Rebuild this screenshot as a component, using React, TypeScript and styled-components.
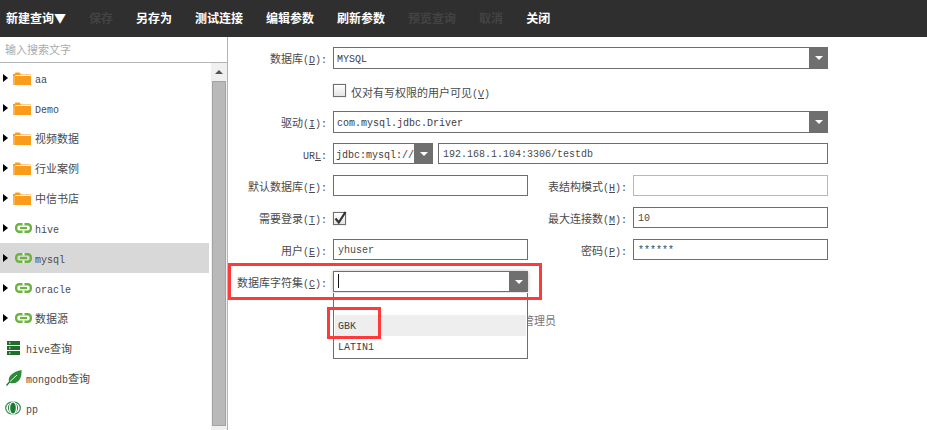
import React from 'react';
import styled, { createGlobalStyle } from 'styled-components';

const Global = createGlobalStyle`
  html, body { margin: 0; padding: 0; background: #fff; }
  body { width: 927px; height: 430px; overflow: hidden; font-family: "Noto Sans CJK SC", "Liberation Sans", sans-serif; }
  * { box-sizing: border-box; }
`;

const Page = styled.div`
  position: relative;
  width: 927px;
  height: 430px;
  display: flex;
  flex-direction: column;
  overflow: hidden;
`;
const Toolbar = styled.div`
  height: 37px;
  background: #2f2f2f;
  display: flex;
  align-items: center;
  gap: 23px;
  padding: 0 0 1px 6px;
  flex: none;
`;
const ToolButton = styled.span<{ $off?: boolean }>`
  font-size: 12px;
  line-height: 16px;
  font-weight: 700;
  white-space: nowrap;
  color: ${p => (p.$off ? '#434343' : '#ffffff')};
`;
const Body = styled.div`
  flex: 1;
  display: flex;
  min-height: 0;
`;
const Sidebar = styled.aside`
  width: 228px;
  flex: none;
  border-right: 1px solid #b4b4b4;
  display: flex;
  flex-direction: column;
`;
const Search = styled.div`
  height: 26px;
  flex: none;
  border-bottom: 1px solid #b4b4b4;
  padding-left: 5px;
  font-size: 11px;
  line-height: 25px;
  color: #aaaaaa;
`;
const TreeArea = styled.div`
  flex: 1;
  display: flex;
  min-height: 0;
`;
const Tree = styled.div`
  width: 209px;
  flex: none;
`;
const Row = styled.div<{ $selected?: boolean }>`
  height: 30px;
  display: flex;
  align-items: center;
  background: ${p => (p.$selected ? '#d8d8d8' : 'transparent')};
  font-size: 11px;
  color: #4a4a4a;
`;
const Caret = styled.span`
  width: 0;
  height: 0;
  margin-left: 3px;
  margin-right: 5px;
  border-left: 5px solid #000;
  border-top: 4.5px solid transparent;
  border-bottom: 4.5px solid transparent;
  flex: none;
`;
const IconSlot = styled.span<{ $w: number; $ml?: number }>`
  display: flex;
  width: ${p => p.$w}px;
  margin-left: ${p => p.$ml ?? 0}px;
  flex: none;
`;
const Mono = styled.span`
  font-family: "Liberation Mono", monospace;
  font-size: 10px;
`;
const Track = styled.div`
  margin-left: 2px;
  width: 16px;
  flex: none;
  background: #f0f0f0;
  display: flex;
  flex-direction: column;
  align-items: center;
  padding-bottom: 4px;
`;
const TrackButton = styled.div`
  height: 18px;
  flex: none;
  display: flex;
  align-items: center;
  justify-content: center;
`;
const UpArrow = styled.span`
  width: 0;
  height: 0;
  border-left: 4px solid transparent;
  border-right: 4px solid transparent;
  border-bottom: 4px solid #555;
`;
const Thumb = styled.div`
  flex: 1;
  width: 14px;
  background: #b9b9b9;
  border: 1px solid #a3a3a3;
`;
const Main = styled.main`
  position: relative;
  flex: 1;
  padding: 10px 0 0 0;
`;
const Form = styled.div`
  display: grid;
  grid-template-columns: 100px 200px 100px 200px;
  grid-auto-rows: 22px;
  row-gap: 10px;
`;
const Label = styled.label`
  font-size: 11px;
  line-height: 23px;
  color: #4a4a4a;
  text-align: right;
  white-space: nowrap;
  padding-right: 1px;
`;
const Field = styled.div<{ $span?: number }>`
  margin-left: 5px;
  grid-column: span ${p => p.$span ?? 1};
  min-width: 0;
`;
const Input = styled.div<{ $light?: boolean }>`
  height: 21px;
  border: 1px solid ${p => (p.$light ? '#b8b8b8' : '#6e6e6e')};
  padding-left: 4px;
  line-height: 22px;
  color: #4a4a4a;
  font-family: "Liberation Mono", monospace;
  font-size: 10px;
  white-space: nowrap;
  flex: 1;
  min-width: 0;
`;
const SelectBox = styled.div<{ $focus?: boolean; $h?: number }>`
  height: ${p => p.$h ?? 22}px;
  border: 1px solid #6e6e6e;
  display: flex;
  align-items: stretch;
  ${p => (p.$focus ? 'box-shadow: 0 0 4px rgba(0,0,0,.25);' : '')}
`;
const SelectText = styled.div`
  flex: 1;
  padding-left: 3px;
  line-height: 23px;
  color: #3c3c3c;
  font-family: "Liberation Mono", monospace;
  font-size: 10px;
  white-space: nowrap;
  overflow: hidden;
`;
const SelectButton = styled.div`
  width: 19px;
  margin: -1px -1px -1px 0;
  flex: none;
  background: #6f6f6f;
  display: flex;
  align-items: center;
  justify-content: center;
`;
const DownArrow = styled.span`
  width: 0;
  height: 0;
  border-left: 4px solid transparent;
  border-right: 4px solid transparent;
  border-top: 4px solid #fff;
`;
const Caretline = styled.span`
  display: block;
  width: 1px;
  height: 14px;
  margin: 2px 0 0 1px;
  background: #111;
`;
const CheckRow = styled.div`
  display: flex;
  align-items: center;
  gap: 5px;
  height: 23px;
  font-size: 11px;
  color: #4a4a4a;
  white-space: nowrap;
`;
const CheckText = styled.span`
  padding-top: 2px;
`;
const Check = styled.span`
  width: 13px;
  height: 13px;
  flex: none;
  border: 1px solid #6e6e6e;
  background: linear-gradient(#ffffff, #e4e4e4);
  box-shadow: 0 0 1px rgba(0,0,0,.3);
  position: relative;
  display: block;
  & svg { position: absolute; left: -1px; top: -3px; }
`;
const UrlGroup = styled.div`
  display: flex;
  gap: 5px;
`;
const UrlSelect = styled(SelectBox)`
  width: 100px;
  flex: none;
  & > div:first-child { padding-left: 2px; }
`;
const Behind = styled.div`
  grid-column: 3 / span 2;
  grid-row: 9;
  align-self: end;
  margin: 0 0 -2px -5px;
  font-size: 11px;
  line-height: 14px;
  color: #777;
  white-space: nowrap;
`;
const Popup = styled.div`
  position: absolute;
  left: 105px;
  top: 256px;
  width: 195px;
  height: 66px;
  background: #fff;
  border: 1px solid #6e6e6e;
  border-top: 0;
  padding: 22px 1px 0 1px;
`;
const Option = styled.div<{ $active?: boolean }>`
  height: 21px;
  padding-left: 3px;
  line-height: 23px;
  font-family: "Liberation Mono", monospace;
  font-size: 10px;
  color: #36424c;
  background: ${p => (p.$active ? '#eeeeee' : 'transparent')};
`;
const Mark = styled.div<{ $l: number; $t: number; $w: number; $h: number }>`
  position: absolute;
  left: ${p => p.$l}px;
  top: ${p => p.$t}px;
  width: ${p => p.$w}px;
  height: ${p => p.$h}px;
  border: 3px solid #ff3a3a;
  pointer-events: none;
`;

const Folder = () => (
  <svg width="18" height="15" viewBox="0 0 18 15">
    <path d="M0 3V14h18V3.5H8L6.5 1.5H2.5L1.5 3z" fill="#f99c1c" />
    <path d="M2.5 4.5H18" stroke="#fff" strokeWidth="1" />
    <path d="M1 5v9" stroke="#fdd08a" strokeWidth="1" />
  </svg>
);
const LinkIcon = () => (
  <svg width="17" height="10" viewBox="0 0 17 10">
    <rect x="1.2" y="1.2" width="14.6" height="7.6" rx="3" fill="none" stroke="#6db33f" strokeWidth="2.4" />
    <path d="M7.5 0h2v2.4h-2zM7.5 7.6h2V10h-2z" fill="#fff" />
    <path d="M5 5h7" stroke="#6db33f" strokeWidth="2.2" />
  </svg>
);
const ServerIcon = () => (
  <svg width="13" height="14" viewBox="0 0 13 14">
    <path d="M0 0h13v4H0zM0 5h13v4H0zM0 10h13v4H0z" fill="#1f6f2b" />
    <path d="M2 2h1.5M2 7h1.5M2 12h1.5" stroke="#fff" strokeWidth="1" />
  </svg>
);
const LeafIcon = () => (
  <svg width="16" height="16" viewBox="0 0 16 16">
    <path d="M15.5 0C16 7 13.5 13 7 13.3 5.4 13.4 3.8 12.8 3 12 1.5 6 7 1.8 15.5 0z" fill="#2c8a38" />
    <path d="M0.5 15.5 3.5 12" stroke="#1f6f2b" strokeWidth="1.2" fill="none" />
    <path d="M4 11.5 11 5" stroke="#fff" strokeWidth="0.9" fill="none" />
  </svg>
);
const RingsIcon = () => (
  <svg width="16" height="14" viewBox="0 0 16 14">
    <circle cx="6.6" cy="7" r="5.9" fill="none" stroke="#2f8a46" strokeWidth="1.2" />
    <circle cx="9.4" cy="7" r="5.9" fill="none" stroke="#2f8a46" strokeWidth="1.2" />
    <ellipse cx="8" cy="7" rx="4" ry="6.6" fill="#fff" />
    <ellipse cx="8" cy="7" rx="2.8" ry="5.6" fill="#1f7a38" />
  </svg>
);

type Item = { name: React.ReactNode; kind: 'folder' | 'link' | 'server' | 'leaf' | 'rings'; selected?: boolean };
const items: Item[] = [
  { name: <Mono>aa</Mono>, kind: 'folder' },
  { name: <Mono>Demo</Mono>, kind: 'folder' },
  { name: '视频数据', kind: 'folder' },
  { name: '行业案例', kind: 'folder' },
  { name: '中信书店', kind: 'folder' },
  { name: <Mono>hive</Mono>, kind: 'link' },
  { name: <Mono>mysql</Mono>, kind: 'link', selected: true },
  { name: <Mono>oracle</Mono>, kind: 'link' },
  { name: '数据源', kind: 'link' },
  { name: <><Mono>hive</Mono>查询</>, kind: 'server' },
  { name: <><Mono>mongodb</Mono>查询</>, kind: 'leaf' },
  { name: <Mono>pp</Mono>, kind: 'rings' },
];

const TreeIcon = ({ kind }: { kind: Item['kind'] }) => {
  switch (kind) {
    case 'folder':
      return <><Caret /><IconSlot $w={22}><Folder /></IconSlot></>;
    case 'link':
      return <><Caret /><IconSlot $w={20} $ml={2}><LinkIcon /></IconSlot></>;
    case 'server':
      return <IconSlot $w={19} $ml={7}><ServerIcon /></IconSlot>;
    case 'leaf':
      return <IconSlot $w={20} $ml={6}><LeafIcon /></IconSlot>;
    default:
      return <IconSlot $w={21} $ml={5}><RingsIcon /></IconSlot>;
  }
};

const Lbl = ({ text, k }: { text: string; k: string }) => (
  <Label>{text}<Mono>(<u>{k}</u>):</Mono></Label>
);

export default function App() {
  return (
    <Page>
      <Global />
      <Toolbar>
        <ToolButton>新建查询▼</ToolButton>
        <ToolButton $off>保存</ToolButton>
        <ToolButton>另存为</ToolButton>
        <ToolButton>测试连接</ToolButton>
        <ToolButton>编辑参数</ToolButton>
        <ToolButton>刷新参数</ToolButton>
        <ToolButton $off>预览查询</ToolButton>
        <ToolButton $off>取消</ToolButton>
        <ToolButton>关闭</ToolButton>
      </Toolbar>
      <Body>
        <Sidebar>
          <Search>输入搜索文字</Search>
          <TreeArea>
            <Tree>
              {items.map((it, i) => (
                <Row key={i} $selected={it.selected}>
                  <TreeIcon kind={it.kind} />
                  <span>{it.name}</span>
                </Row>
              ))}
            </Tree>
            <Track>
              <TrackButton><UpArrow /></TrackButton>
              <Thumb />
            </Track>
          </TreeArea>
        </Sidebar>
        <Main>
          <Form>
            <Lbl text="数据库" k="D" />
            <Field $span={3}>
              <SelectBox><SelectText>MYSQL</SelectText><SelectButton><DownArrow /></SelectButton></SelectBox>
            </Field>
            <span />
            <Field $span={3}>
              <CheckRow><Check /><CheckText>仅对有写权限的用户可见<Mono>(<u>V</u>)</Mono></CheckText></CheckRow>
            </Field>
            <Lbl text="驱动" k="I" />
            <Field $span={3}>
              <SelectBox><SelectText>com.mysql.jdbc.Driver</SelectText><SelectButton><DownArrow /></SelectButton></SelectBox>
            </Field>
            <Label><Mono>UR<u>L</u>:</Mono></Label>
            <Field $span={3}>
              <UrlGroup>
                <UrlSelect $h={21}><SelectText>jdbc:mysql://</SelectText><SelectButton><DownArrow /></SelectButton></UrlSelect>
                <Input>192.168.1.104:3306/testdb</Input>
              </UrlGroup>
            </Field>
            <Lbl text="默认数据库" k="F" />
            <Field><Input /></Field>
            <Lbl text="表结构模式" k="H" />
            <Field><Input $light /></Field>
            <Lbl text="需要登录" k="T" />
            <Field>
              <CheckRow>
                <Check>
                  <svg width="15" height="15" viewBox="0 0 15 15">
                    <path d="M2.5 8.5 5.8 12.5 12.5 2" fill="none" stroke="#333" strokeWidth="2.2" />
                  </svg>
                </Check>
              </CheckRow>
            </Field>
            <Lbl text="最大连接数" k="M" />
            <Field><Input>10</Input></Field>
            <Lbl text="用户" k="E" />
            <Field><Input>yhuser</Input></Field>
            <Lbl text="密码" k="P" />
            <Field><Input>******</Input></Field>
            <Lbl text="数据库字符集" k="C" />
            <Field>
              <SelectBox $focus $h={21}><SelectText><Caretline /></SelectText><SelectButton><DownArrow /></SelectButton></SelectBox>
            </Field>
            <Behind>管理员</Behind>
          </Form>
          <Popup>
            <Option $active>GBK</Option>
            <Option>LATIN1</Option>
          </Popup>
          <Mark $l={0} $t={226} $w={314} $h={37} />
          <Mark $l={99} $t={270} $w={54} $h={32} />
        </Main>
      </Body>
    </Page>
  );
}
